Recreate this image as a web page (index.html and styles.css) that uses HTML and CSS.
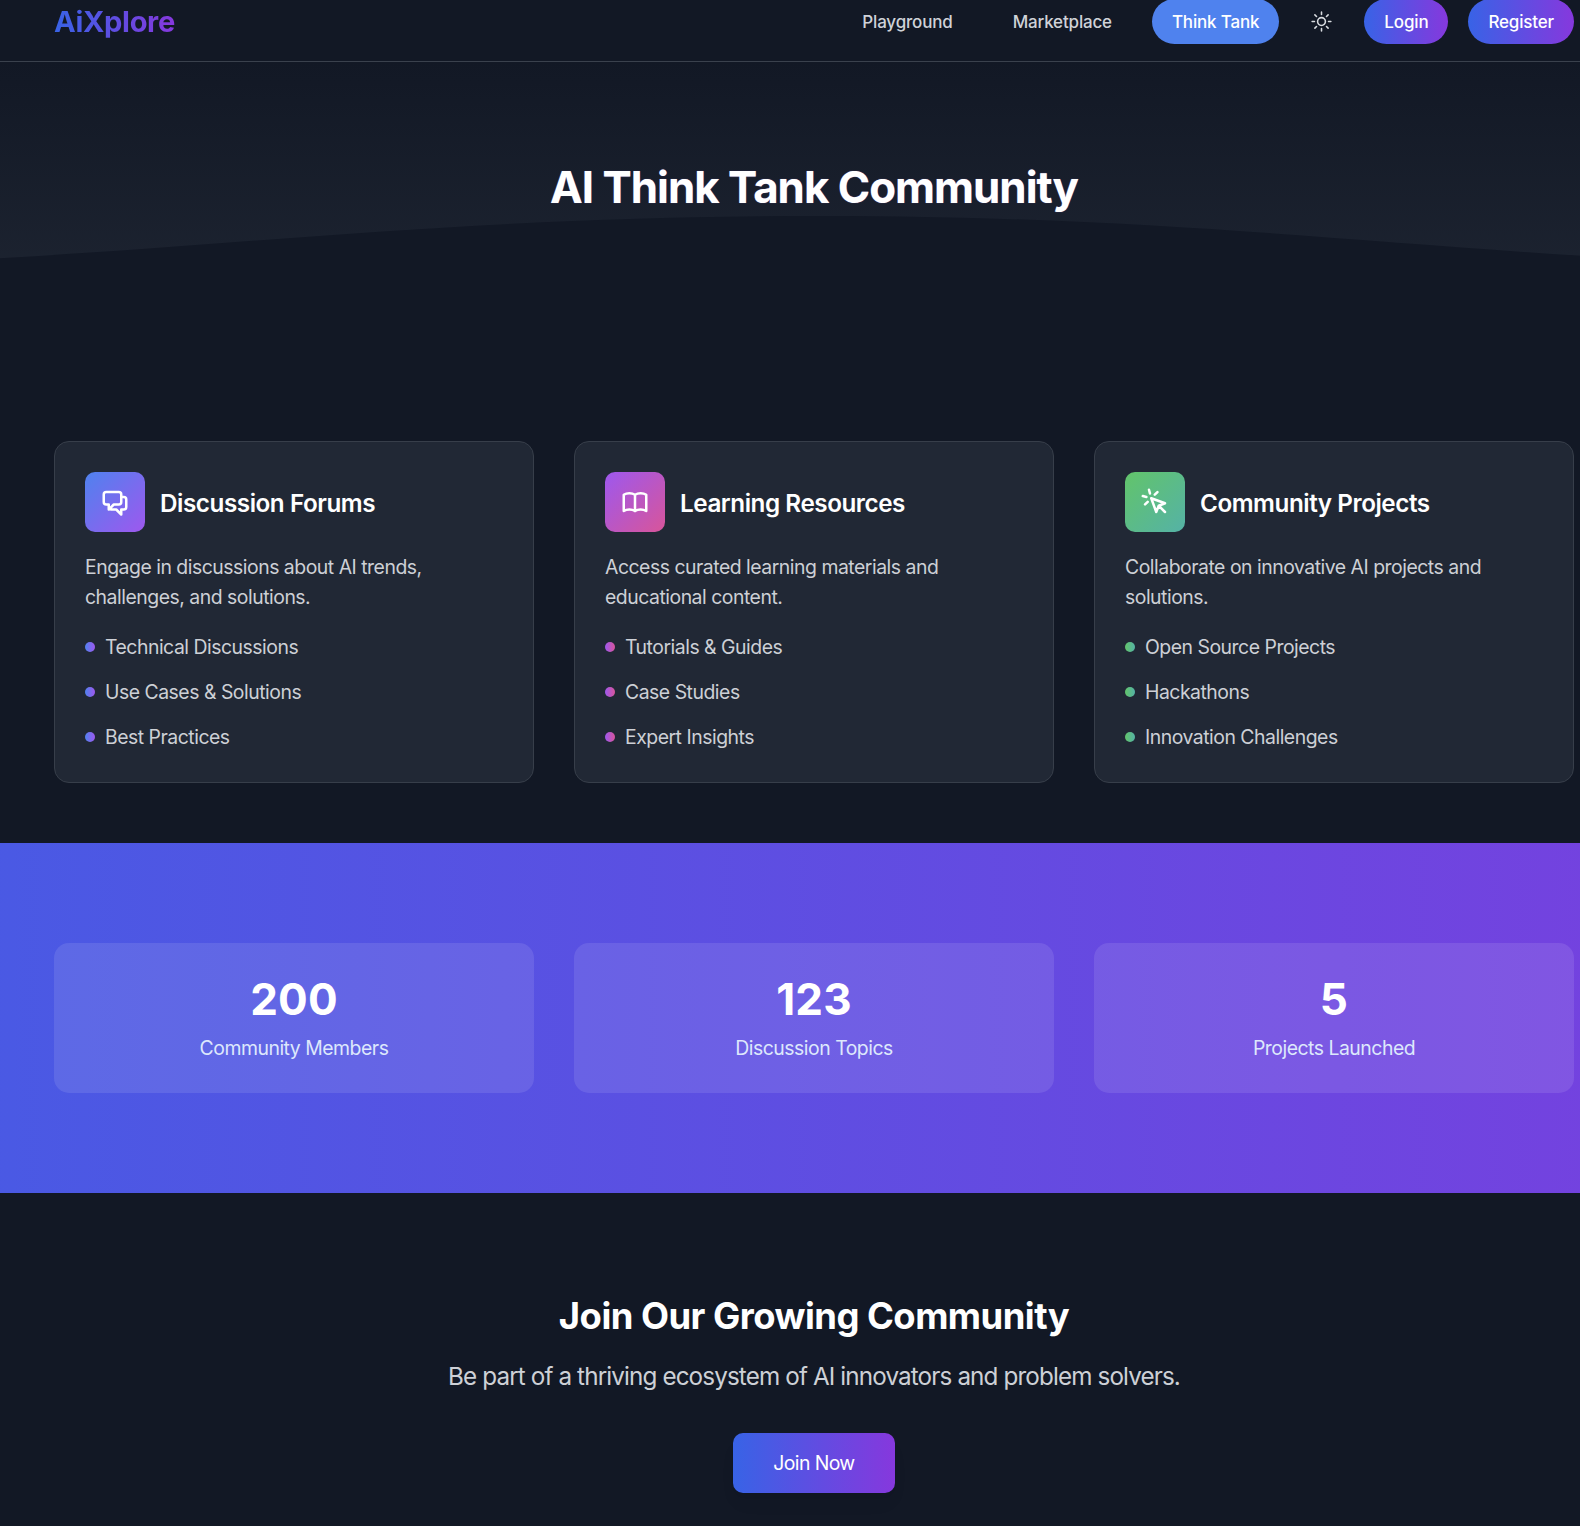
FILE: index.html
```html
<!DOCTYPE html>
<html lang="en">
<head>
<meta charset="utf-8">
<title>AiXplore – AI Think Tank Community</title>
<link rel="stylesheet" href="styles.css">
</head>
<body>
<header class="header">
  <div class="container header-row">
    <a class="logo">AiXplore</a>
    <nav class="nav">
      <a class="pill">Playground</a>
      <a class="pill">Marketplace</a>
      <a class="pill pill-active">Think Tank</a>
      <button class="theme-toggle" aria-label="Toggle theme">
        <svg viewBox="0 0 24 24"><path d="M12 3v2.25m6.364.386-1.591 1.591M21 12h-2.25m-.386 6.364-1.591-1.591M12 18.75V21m-4.773-4.227-1.591 1.591M5.25 12H3m4.227-4.773L5.636 5.636M15.75 12a3.75 3.75 0 1 1-7.5 0 3.75 3.75 0 0 1 7.5 0Z"/></svg>
      </button>
      <a class="pill pill-gradient">Login</a>
      <a class="pill pill-gradient">Register</a>
    </nav>
  </div>
</header>

<main>
  <section class="hero">
    <svg class="wave" viewBox="0 0 1580 310" preserveAspectRatio="none"><path d="M0 196.3C270 181 480 154 820 154C1130 154 1330 178 1580 193.7V310H0Z"/></svg>
    <div class="container"><h1 class="hero-title">AI Think Tank Community</h1></div>
  </section>

  <section class="container grid features">
    <article class="card blue">
      <div class="card-head">
        <div class="card-icon"><svg viewBox="0 0 24 24"><path d="M17 8h2a2 2 0 012 2v6a2 2 0 01-2 2h-2v4l-4-4H9a1.994 1.994 0 01-1.414-.586m0 0L11 14h4a2 2 0 002-2V6a2 2 0 00-2-2H5a2 2 0 00-2 2v6a2 2 0 002 2h2v4l.586-.586z"/></svg></div>
        <h2 class="card-title">Discussion Forums</h2>
      </div>
      <p class="card-text">Engage in discussions about AI trends,<br>challenges, and solutions.</p>
      <ul class="list">
        <li>Technical Discussions</li>
        <li>Use Cases &amp; Solutions</li>
        <li>Best Practices</li>
      </ul>
    </article>
    <article class="card pink">
      <div class="card-head">
        <div class="card-icon"><svg viewBox="0 0 24 24"><path d="M12 6.253v13m0-13C10.832 5.477 9.246 5 7.5 5S4.168 5.477 3 6.253v13C4.168 18.477 5.754 18 7.5 18s3.332.477 4.5 1.253m0-13C13.168 5.477 14.754 5 16.5 5c1.747 0 3.332.477 4.5 1.253v13C19.832 18.477 18.247 18 16.5 18c-1.746 0-3.332.477-4.5 1.253"/></svg></div>
        <h2 class="card-title">Learning Resources</h2>
      </div>
      <p class="card-text">Access curated learning materials and<br>educational content.</p>
      <ul class="list">
        <li>Tutorials &amp; Guides</li>
        <li>Case Studies</li>
        <li>Expert Insights</li>
      </ul>
    </article>
    <article class="card green">
      <div class="card-head">
        <div class="card-icon"><svg viewBox="0 0 24 24"><path d="M15 15l-2 5L9 9l11 4-5 2zm0 0l5 5M7.188 2.239l.777 2.897M5.136 7.965l-2.898-.777M13.95 4.05l-2.122 2.122m-5.657 5.656l-2.12 2.122"/></svg></div>
        <h2 class="card-title">Community Projects</h2>
      </div>
      <p class="card-text">Collaborate on innovative AI projects and<br>solutions.</p>
      <ul class="list">
        <li>Open Source Projects</li>
        <li>Hackathons</li>
        <li>Innovation Challenges</li>
      </ul>
    </article>
  </section>

  <section class="stats">
    <div class="container grid">
      <div class="stat"><div class="stat-value">200</div><div class="stat-label">Community Members</div></div>
      <div class="stat"><div class="stat-value">123</div><div class="stat-label">Discussion Topics</div></div>
      <div class="stat"><div class="stat-value">5</div><div class="stat-label">Projects Launched</div></div>
    </div>
  </section>

  <section class="container join">
    <h2 class="join-title">Join Our Growing Community</h2>
    <p class="join-text">Be part of a thriving ecosystem of AI innovators and problem solvers.</p>
    <button class="join-button">Join Now</button>
  </section>
</main>
</body>
</html>
```
FILE: styles.css
```css
*, *::before, *::after { box-sizing: border-box; margin: 0; padding: 0; }

body {
  display: flow-root;
  height: 1526px;
  overflow: hidden;
  background: #121825;
  color: #fff;
  font-family: Inter, "Liberation Sans", sans-serif;
  font-size: 19.4px;
  line-height: 30px;
  letter-spacing: -0.48px;
  white-space: nowrap;
}

svg { display: block; fill: none; stroke: currentColor; stroke-linecap: round; stroke-linejoin: round; }
button { border: 0; background: none; color: inherit; font: inherit; }

.container { width: 1520px; margin-left: 54px; }

/* Header */
.header { height: 81px; margin-top: -19px; padding-top: 1px; border-bottom: 1px solid #3a414d; }
.header-row { display: flex; align-items: center; justify-content: space-between; height: 79px; }
.logo {
  font-size: 29.1px; font-weight: 700; line-height: 40px; letter-spacing: -0.35px;
  background: linear-gradient(to right, #3863e6, #8638dd);
  -webkit-background-clip: text; background-clip: text; color: transparent;
}
.nav { display: flex; align-items: center; gap: 20px; }
.pill {
  padding: 11px 20px 9px; border-radius: 23px; color: #cfd2d8;
  font-size: 17px; font-weight: 500; line-height: 25px; letter-spacing: -0.17px;
}
.pill-active { background: #4f82ee; color: #fff; }
.pill-gradient { background: linear-gradient(to right, #3863e6, #8638dd); color: #fff; }
.theme-toggle { padding: 10px; color: #d8dbe0; }
.theme-toggle svg { width: 25px; height: 25px; stroke-width: 1.5; }

/* Hero */
.hero { position: relative; height: 310px; padding-top: 101px; background: linear-gradient(#121825, #212835); }
.wave { position: absolute; inset: 0; width: 100%; height: 100%; fill: #121825; stroke: none; }
.hero-title {
  position: relative; text-align: center; font-size: 43.8px; font-weight: 700; line-height: 50px;
  letter-spacing: -0.97px; text-shadow: 0 0 1px rgba(168, 130, 246, .6);
}

/* Feature cards */
.grid { display: grid; grid-template-columns: repeat(3, 480px); gap: 40px; }
.features { padding: 69px 0 60px; }
.card { height: 342px; padding: 30px; border: 1px solid #373e4a; border-radius: 15px; background: #212835; }
.card-head { display: flex; align-items: center; gap: 15px; margin-bottom: 20px; }
.card-icon {
  display: grid; place-items: center; width: 60px; height: 60px; border-radius: 10px;
  background: linear-gradient(to bottom right, var(--from), var(--to));
}
.card-icon svg { width: 30px; height: 30px; stroke-width: 2; }
.card-title { padding-top: 2px; font-size: 24.25px; font-weight: 600; line-height: 35px; letter-spacing: -0.45px; }
.card-text { margin-bottom: 20px; color: #cdd0d6; }
.list { display: grid; gap: 15px; list-style: none; color: #cdd0d6; }
.list li { display: flex; align-items: center; gap: 10px; }
.list li::before {
  content: ""; width: 10px; height: 10px; border-radius: 50%;
  background: linear-gradient(to right, var(--from), var(--to));
}
.blue { --from: #4f82ee; --to: #9e58ee; }
.pink { --from: #9d58ee; --to: #d8559a; }
.green { --from: #62c46a; --to: #55b2a6; }

/* Stats */
.stats { height: 350px; padding: 100px 0; background: linear-gradient(to right, #3863e6 -686px, #8638dd 2314px); }
.stat { height: 150px; padding: 31px 30px 29px; border-radius: 15px; background: rgba(255, 255, 255, .1); text-align: center; }
.stat-value { margin-bottom: 9px; font-size: 44px; font-weight: 700; line-height: 50px; letter-spacing: 0.2px; }
.stat-label { color: #dde8fc; }

/* Call to action */
.join { padding-top: 101px; text-align: center; }
.join-title { margin-bottom: 20px; font-size: 36.4px; font-weight: 700; line-height: 45px; letter-spacing: -0.52px; }
.join-text { margin-bottom: 39px; color: #cdd0d6; font-size: 24.25px; line-height: 35px; letter-spacing: -0.88px; }
.join-button {
  padding: 15px 40px; border-radius: 10px; letter-spacing: -0.6px;
  background: linear-gradient(to right, #3863e6, #8638dd);
  box-shadow: 0 12px 19px -4px rgba(0, 0, 0, .05), 0 5px 7px -5px rgba(0, 0, 0, .07);
}
```
